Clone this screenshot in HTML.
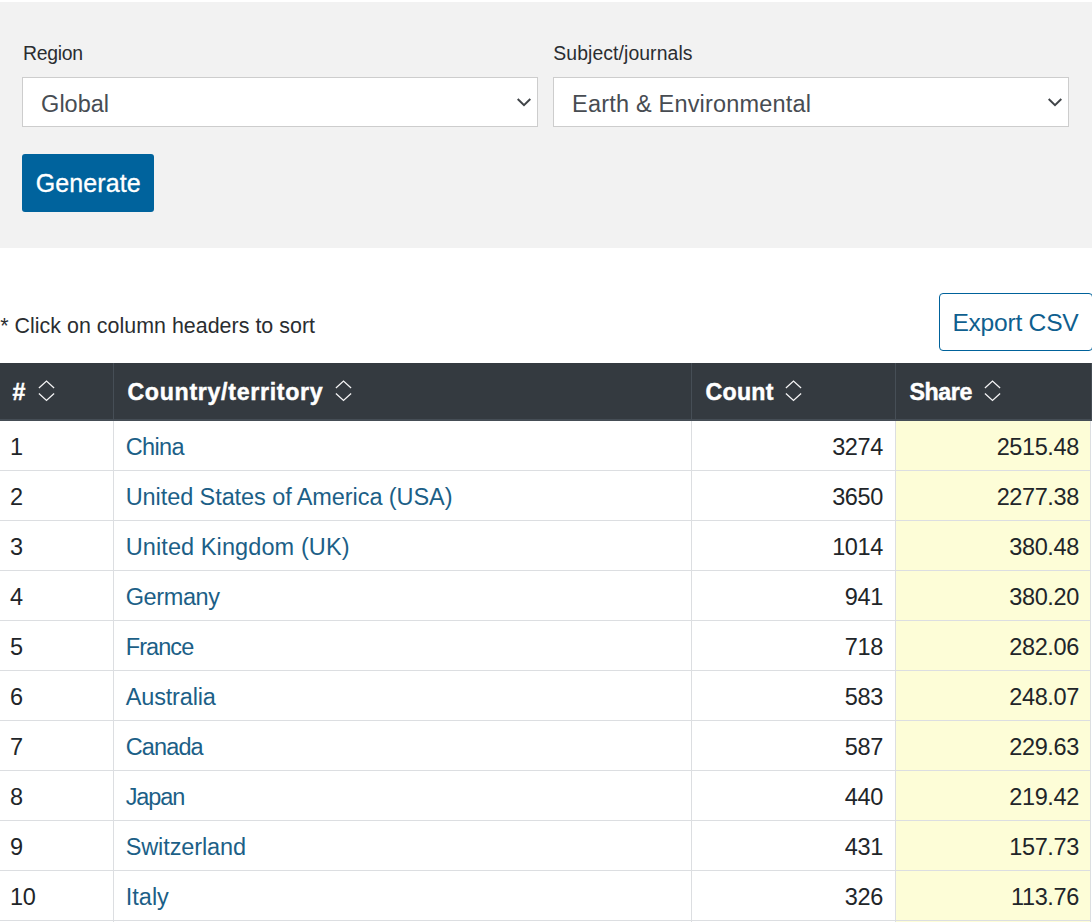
<!DOCTYPE html>
<html lang="en">
<head>
<meta charset="utf-8">
<title>Country/territory tables</title>
<style>
  html, body { margin: 0; padding: 0; }
  body {
    width: 1092px; height: 922px; overflow: hidden; position: relative;
    background: #ffffff; color: #212529;
    font-family: "Liberation Sans", sans-serif;
    font-size: 23.5px;
  }
  .abs { position: absolute; white-space: nowrap; }

  /* ---------- filter panel ---------- */
  #panel { left: 0; top: 2px; width: 1092px; height: 246px; background: #f2f2f2; }
  .lbl { font-size: 19.4px; color: #2a2d30; line-height: 24px; height: 24px; top: 41px; }
  #lbl1 { left: 22.9px; }
  #lbl2 { left: 553.3px; }
  .sel {
    box-sizing: border-box; height: 50px; width: 516px; top: 77px;
    background: #ffffff; border: 1px solid #cdcdcd;
  }
  #sel1 { left: 22px; }
  #sel2 { left: 553px; }
  .sel span { position: absolute; left: 18.1px; top: 1px; font-size: 23.5px; line-height: 50px; color: #474c52; }
  .sel svg { position: absolute; right: 6.1px; top: 19.6px; }
  #gen {
    left: 22px; top: 154px; width: 132px; height: 58px;
    background: #00639d; border-radius: 3px;
  }
  #gent { position: absolute; left: 13.8px; top: 0; color: #ffffff; -webkit-text-stroke: 0.3px #ffffff; font-size: 25px; line-height: 58px; }

  /* ---------- hint + export ---------- */
  #hint { left: 0.2px; top: 310.5px; font-size: 21.4px; line-height: 30px; color: #2a2d30; }
  #exp {
    left: 939px; top: 293px; width: 154px; height: 58px; box-sizing: border-box;
    border: 1px solid #00629b; border-radius: 4px; background: #ffffff;
  }
  #expt { position: absolute; left: 12.4px; top: 0.5px; color: #0f5f8f; font-size: 24.6px; line-height: 56px; }

  /* ---------- table ---------- */
  #thead { left: 0; top: 363px; width: 1092px; height: 58px; background: #343a40; box-sizing: border-box; border-right: 1px solid #454d55; border-bottom: 2px solid #454d55; }
  .th { top: 1.3px; height: 57px; line-height: 57px; color: #ffffff; font-weight: bold; font-size: 23.2px; -webkit-text-stroke: 0.45px #ffffff; }
  .vsep { position: absolute; top: 0; width: 1px; height: 58px; background: #464e56; }
  .sort { position: absolute; }
  #tbody { left: 0; top: 420px; width: 1091px; height: 502px; }
  #tbody .row:first-child { border-top-color: transparent; }
  .row { position: absolute; left: 0; width: 1091px; height: 50px; border-top: 1px solid #dcdee1; box-sizing: border-box; }
  .c { position: absolute; top: 0; height: 49px; line-height: 52px; white-space: nowrap; }
  .c1 { left: 10.0px; letter-spacing: -0.4px; }
  .c2 { left: 125.7px; color: #1c5f87; }
  .c3 { right: 208.2px; text-align: right; letter-spacing: -0.4px; }
  .c4 { right: 12.2px; text-align: right; letter-spacing: -0.4px; }
  #share-bg { left: 896px; top: 421px; width: 194px; height: 501px; background: #fdfdd7; }
  .bsep { position: absolute; top: 421px; width: 1px; height: 502px; background: #dcdee1; }
</style>
</head>
<body>

<div id="panel" class="abs"></div>
<div id="lbl1" class="abs lbl" style="letter-spacing:-0.25px">Region</div>
<div id="lbl2" class="abs lbl" style="letter-spacing:0.08px">Subject/journals</div>

<div id="sel1" class="abs sel"><span id="sel1t" style="letter-spacing:0.01px">Global</span><svg width="14" height="9" viewBox="0 0 14 9"><path d="M0.7 1 L7 7.1 L13.3 1" fill="none" stroke="#404448" stroke-width="2"/></svg></div>
<div id="sel2" class="abs sel"><span id="sel2t" style="letter-spacing:0.19px">Earth &amp; Environmental</span><svg width="14" height="9" viewBox="0 0 14 9"><path d="M0.7 1 L7 7.1 L13.3 1" fill="none" stroke="#404448" stroke-width="2"/></svg></div>

<div id="gen" class="abs"><span id="gent" style="letter-spacing:0.09px">Generate</span></div>

<div id="hint" class="abs" style="letter-spacing:0.03px">* Click on column headers to sort</div>
<div id="exp" class="abs"><span id="expt" style="letter-spacing:-0.24px">Export CSV</span></div>

<div id="share-bg" class="abs"></div>

<div id="thead" class="abs">
  <div class="vsep" style="left:113px"></div>
  <div class="vsep" style="left:691px"></div>
  <div class="vsep" style="left:895px"></div>
  <div class="abs th" id="h1" style="left:12.6px;letter-spacing:0">#</div>
  <div class="abs th" id="h2" style="left:127.4px;letter-spacing:0.69px">Country/territory</div>
  <div class="abs th" id="h3" style="left:705.6px;letter-spacing:0.23px">Count</div>
  <div class="abs th" id="h4" style="left:909.4px;letter-spacing:-0.36px">Share</div>
  <svg class="sort" style="left:37.9px;top:16px" width="17" height="24" viewBox="0 0 17 24"><path d="M0.9 8.9 L8.5 2.1 L16.1 8.9 M0.9 14.4 L8.5 21.4 L16.1 14.4" fill="none" stroke="#f4f4f5" stroke-width="1.3"/></svg>
  <svg class="sort" style="left:334.5px;top:16px" width="17" height="24" viewBox="0 0 17 24"><path d="M0.9 8.9 L8.5 2.1 L16.1 8.9 M0.9 14.4 L8.5 21.4 L16.1 14.4" fill="none" stroke="#f4f4f5" stroke-width="1.3"/></svg>
  <svg class="sort" style="left:785px;top:16px" width="17" height="24" viewBox="0 0 17 24"><path d="M0.9 8.9 L8.5 2.1 L16.1 8.9 M0.9 14.4 L8.5 21.4 L16.1 14.4" fill="none" stroke="#f4f4f5" stroke-width="1.3"/></svg>
  <svg class="sort" style="left:984.2px;top:16px" width="17" height="24" viewBox="0 0 17 24"><path d="M0.9 8.9 L8.5 2.1 L16.1 8.9 M0.9 14.4 L8.5 21.4 L16.1 14.4" fill="none" stroke="#f4f4f5" stroke-width="1.3"/></svg>
</div>

<div id="tbody" class="abs">
  <div class="row" style="top:0px"><span class="c c1">1</span><span class="c c2" id="n0" style="letter-spacing:-0.63px">China</span><span class="c c3">3274</span><span class="c c4">2515.48</span></div>
  <div class="row" style="top:50px"><span class="c c1">2</span><span class="c c2" id="n1" style="letter-spacing:-0.08px">United States of America (USA)</span><span class="c c3">3650</span><span class="c c4">2277.38</span></div>
  <div class="row" style="top:100px"><span class="c c1">3</span><span class="c c2" id="n2" style="letter-spacing:0.10px">United Kingdom (UK)</span><span class="c c3">1014</span><span class="c c4">380.48</span></div>
  <div class="row" style="top:150px"><span class="c c1">4</span><span class="c c2" id="n3" style="letter-spacing:-0.39px">Germany</span><span class="c c3">941</span><span class="c c4">380.20</span></div>
  <div class="row" style="top:200px"><span class="c c1">5</span><span class="c c2" id="n4" style="letter-spacing:-0.91px">France</span><span class="c c3">718</span><span class="c c4">282.06</span></div>
  <div class="row" style="top:250px"><span class="c c1">6</span><span class="c c2" id="n5" style="letter-spacing:-0.15px">Australia</span><span class="c c3">583</span><span class="c c4">248.07</span></div>
  <div class="row" style="top:300px"><span class="c c1">7</span><span class="c c2" id="n6" style="letter-spacing:-0.87px">Canada</span><span class="c c3">587</span><span class="c c4">229.63</span></div>
  <div class="row" style="top:350px"><span class="c c1">8</span><span class="c c2" id="n7" style="letter-spacing:-1.13px">Japan</span><span class="c c3">440</span><span class="c c4">219.42</span></div>
  <div class="row" style="top:400px"><span class="c c1">9</span><span class="c c2" id="n8" style="letter-spacing:-0.11px">Switzerland</span><span class="c c3">431</span><span class="c c4">157.73</span></div>
  <div class="row" style="top:450px"><span class="c c1">10</span><span class="c c2" id="n9" style="letter-spacing:0.02px">Italy</span><span class="c c3">326</span><span class="c c4">113.76</span></div>
  <div class="row" style="top:500px"></div>
</div>
<div class="bsep" style="left:113px"></div>
<div class="bsep" style="left:691px"></div>
<div class="bsep" style="left:895px"></div>
<div class="bsep" style="left:1090px"></div>

</body>
</html>
